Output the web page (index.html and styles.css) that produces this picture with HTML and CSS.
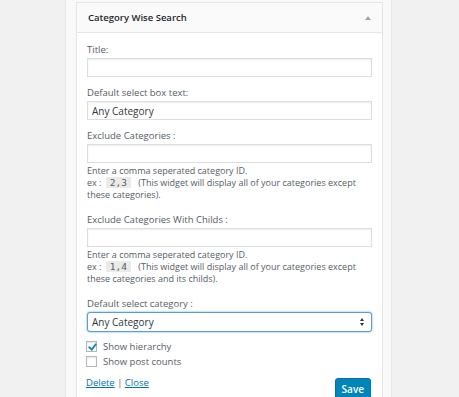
FILE: index.html
```html
<!DOCTYPE html>
<html lang="en">
<head>
  <meta charset="UTF-8" />
  <title>Widgets</title>
  <link rel="stylesheet" href="styles.css">
</head>
<body>
  <div class="sidebar">
    <div class="widget">
      <div class="widget-top">
        <h3>Category Wise Search</h3>
        <span class="toggle"></span>
      </div>

      <div class="widget-inside">
        <div class="field">
          <label for="cws-title">Title:</label>
          <input type="text" id="cws-title" value="">
        </div>

        <div class="field">
          <label for="cws-select-text">Default select box text:</label>
          <input type="text" id="cws-select-text" value="Any Category">
        </div>

        <div class="field">
          <label for="cws-exclude">Exclude Categories :</label>
          <input type="text" id="cws-exclude" value="">
          <small class="help">
            Enter a comma seperated category ID.<br>
            ex : <code>2,3</code> (This widget will display all of your categories except these categories).
          </small>
        </div>

        <div class="field">
          <label for="cws-exclude-childs">Exclude Categories With Childs :</label>
          <input type="text" id="cws-exclude-childs" value="">
          <small class="help">
            Enter a comma seperated category ID.<br>
            ex : <code>1,4</code> (This widget will display all of your categories except these categories and its childs).
          </small>
        </div>

        <div class="field">
          <label for="cws-default">Default select category :</label>
          <span class="select" id="cws-default">Any Category<span class="arrows"></span></span>
        </div>

        <div class="checks">
          <label class="check"><span class="box checked"></span>Show hierarchy</label>
          <label class="check"><span class="box"></span>Show post counts</label>
        </div>

        <div class="widget-actions">
          <div class="links">
            <a href="#">Delete</a> | <a href="#">Close</a>
          </div>
          <button class="button-primary">Save</button>
        </div>
      </div>
    </div>
  </div>
</body>
</html>
```

FILE: styles.css
```css
:root {
  --bg: #f1f1f1;
  --border: #e5e5e5;
  --input-border: #dddddd;
  --text: #555d66;
  --heading: #23282d;
  --link: #0073aa;
  --primary: #0085ba;
}
* { box-sizing: border-box; }
body {
  margin: 0;
  background: var(--bg);
  font-family: "Open Sans", "Liberation Sans", sans-serif;
  font-size: 9.5px;
  color: var(--text);
  overflow: hidden;
}
.sidebar {
  margin-left: 65px;
  width: 327px;
  height: 397px;
  background: #f9f9f9;
  border-left: 1px solid #e8e8e8;
  border-right: 1px solid #e8e8e8;
  padding: 2px 8px 0 10px;
}
.widget {
  background: #fff;
  border: 1px solid var(--border);
  border-bottom: none;
  height: 400px;
}
.widget-top {
  display: flex;
  align-items: center;
  justify-content: space-between;
  height: 30px;
  padding: 0 11px;
  background: #fafafa;
  border-bottom: 1px solid var(--border);
}
.widget-top h3 {
  margin: 0;
  font-size: 9.5px;
  font-weight: 600;
  color: var(--heading);
}
.toggle {
  width: 0;
  height: 0;
  border-left: 3px solid transparent;
  border-right: 3px solid transparent;
  border-bottom: 4px solid #a0a5aa;
  margin-top: 1px;
}
.widget-inside {
  padding: 11px 10px 0 10px;
}
.field {
  margin: 0 0 10px;
}
.field label {
  display: block;
  line-height: 12px;
  margin-bottom: 2px;
}
.field input {
  display: block;
  width: 100%;
  height: 19px;
  margin: 0;
  padding: 0 4px;
  border: 1px solid var(--input-border);
  box-shadow: inset 0 1px 2px rgba(0, 0, 0, 0.07);
  font-family: inherit;
  font-size: 10px;
  color: #32373c;
  background: #fff;
}
.help {
  display: block;
  font-size: 9px;
  line-height: 12px;
  margin-top: 2px;
  margin-bottom: 13px;
}
code {
  font-family: "DejaVu Sans Mono", "Liberation Mono", monospace;
  font-size: 9.5px;
  line-height: 11px;
  background: #eaeaea;
  padding: 0 4px;
  margin: 0 5px 0 2px;
}
.select {
  display: flex;
  align-items: center;
  justify-content: space-between;
  height: 20px;
  padding: 0 6px 0 4px;
  border: 1px solid #5b9dd9;
  border-radius: 3px;
  box-shadow: 0 0 2px rgba(30, 140, 190, 0.8);
  font-size: 10px;
  color: #32373c;
  background: #fff;
}
.arrows {
  position: relative;
  width: 5px;
  height: 8px;
}
.arrows::before,
.arrows::after {
  content: "";
  position: absolute;
  left: 0;
  border-left: 2.5px solid transparent;
  border-right: 2.5px solid transparent;
}
.arrows::before {
  top: 0;
  border-bottom: 3px solid #333;
}
.arrows::after {
  bottom: 0;
  border-top: 3px solid #333;
}
.checks {
  margin-top: -1px;
  display: flex;
  flex-direction: column;
  gap: 4px;
}
.check {
  display: flex;
  align-items: center;
  gap: 6px;
  height: 11px;
  font-size: 9.5px;
  margin-left: -1px;
}
.box {
  width: 11px;
  height: 11px;
  border: 1px solid #b4b9be;
  background: #fff;
  box-shadow: inset 0 1px 2px rgba(0, 0, 0, 0.1);
  position: relative;
}
.box.checked::after {
  content: "";
  position: absolute;
  left: 3px;
  top: 0;
  width: 3px;
  height: 6px;
  border-right: 2px solid #1e8cbe;
  border-bottom: 2px solid #1e8cbe;
  transform: rotate(40deg);
}
.widget-actions {
  display: flex;
  justify-content: space-between;
  align-items: flex-start;
  margin-top: 11px;
}
.links {
  line-height: 10px;
  font-size: 9.5px;
  margin-left: -1px;
}
.links a {
  color: var(--link);
}
.button-primary {
  margin-right: 1px;
  height: 22px;
  padding: 0 6px;
  background: var(--primary);
  border: 1px solid #0073aa;
  border-radius: 3px;
  box-shadow: 0 1px 0 #006799;
  color: #fff;
  font-family: inherit;
  font-size: 10px;
  font-weight: 600;
}
```
